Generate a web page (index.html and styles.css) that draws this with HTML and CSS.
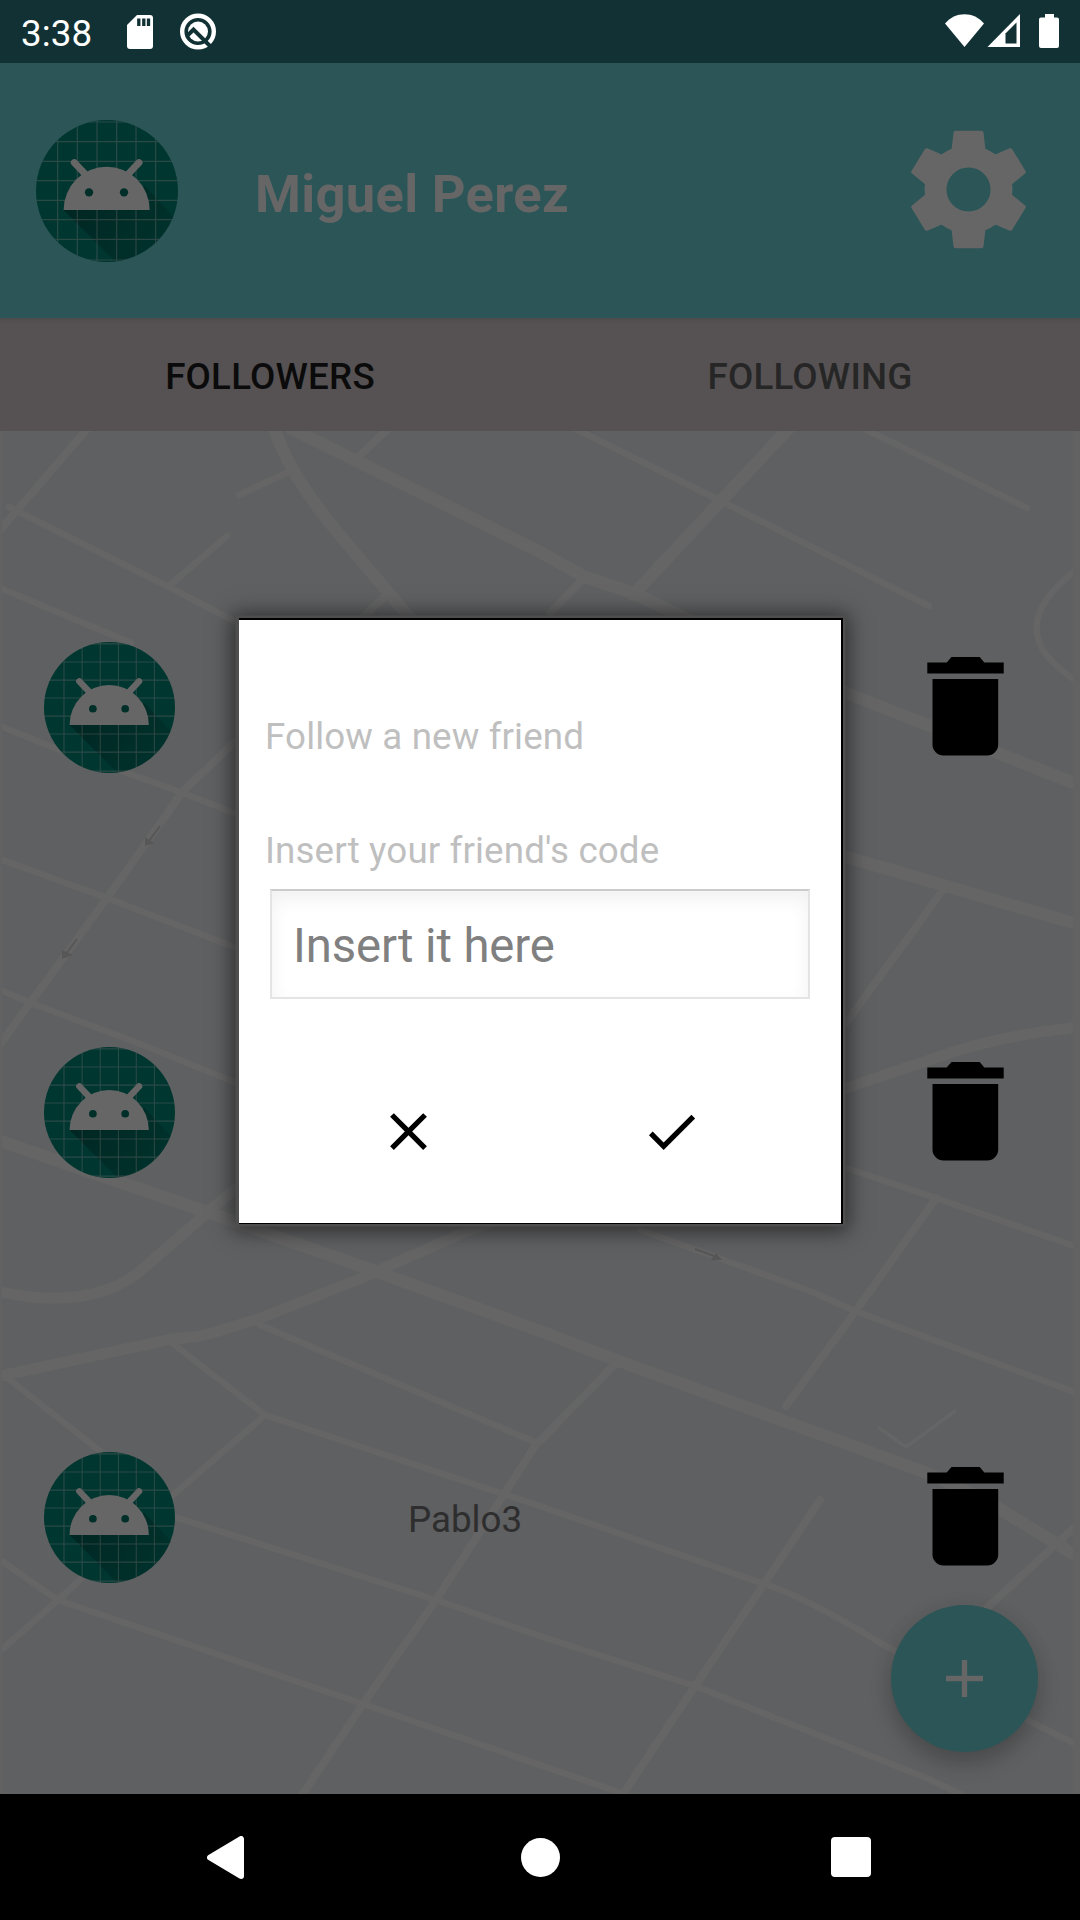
FILE: index.html
```html
<!DOCTYPE html>
<html lang="en">
<head>
<meta charset="utf-8">
<title>Followers</title>
<link rel="stylesheet" href="styles.css">
</head>
<body>
<svg class="defs" width="0" height="0">
  <defs>
    <linearGradient id="shade" x1="131" y1="270" x2="400" y2="480" gradientUnits="userSpaceOnUse">
      <stop offset="0" stop-color="#000" stop-opacity=".32"/>
      <stop offset="1" stop-color="#000" stop-opacity=".08"/>
    </linearGradient>
    <clipPath id="disc"><circle cx="261" cy="273" r="213"/></clipPath>
    <symbol id="avatar" viewBox="48 60 426 426">
      <g clip-path="url(#disc)">
        <rect x="48" y="60" width="426" height="426" fill="#003630"/>
        <path d="M131 330 300 499H480V370L375 258Z" fill="url(#shade)"/>
        <path d="M113 60V486M172 60V486M231 60V486M290 60V486M348 60V486M407 60V486M48 66H474M48 125H474M48 184H474M48 242H474M48 301H474M48 359H474M48 418H474M48 480H474" stroke="#666" stroke-opacity=".42" stroke-width="3.6"/>
      </g>
      <path d="M131 330A129 130 0 0 1 389 330Z" fill="#666"/>
      <path d="M163 188 197 224M357 188 323 224" stroke="#666" stroke-width="21" stroke-linecap="round"/>
      <circle cx="207" cy="277" r="12.5" fill="#002f2a"/><circle cx="312" cy="277" r="12.5" fill="#002f2a"/>
    </symbol>
    <symbol id="trash" viewBox="0 0 77 99">
      <path d="M.3 16.500V5.500H19.700L24.500 0H52.700L57.300 5.500H76.700V16.500ZM5.500 22H71.200V87.500A11 11 0 0 1 60.200 98.500H16.500A11 11 0 0 1 5.500 87.500Z"/>
    </symbol>
  </defs>
</svg>
<div class="screen">
  <div class="statusbar">
    <span class="time">3:38</span>
    <svg class="sd" viewBox="0 0 26 34"><path d="M10 0H23A3 3 0 0 1 26 3V31A3 3 0 0 1 23 34H3A3 3 0 0 1 0 31V10Z" fill="#fff"/><path d="M11.800 3.500V11M16.800 3.500V11M21.500 3.500V11" stroke="#113134" stroke-width="3.300"/></svg>
    <svg class="quick" viewBox="0 0 36 37"><circle cx="18" cy="18.500" r="15.800" fill="none" stroke="#fff" stroke-width="4.400"/><circle cx="18" cy="18.500" r="10" fill="#fff"/><path d="M8 22 13.500 16.500 30 33" fill="none" stroke="#113134" stroke-width="4"/></svg>
    <svg class="signals" viewBox="0 0 114 34">
      <path d="M0 9.500C10 -3 29 -3 39 9.500L19.500 33Z" fill="#fff"/>
      <path d="M42.500 33 75 0V33Z" fill="#fff"/><path d="M60.500 19.500 71.500 8.500V29.500H60.500Z" fill="#113134"/>
      <path d="M100 0H109V3.500H112A2 2 0 0 1 114 5.500V32A2 2 0 0 1 112 34H96A2 2 0 0 1 94 32V5.500A2 2 0 0 1 96 3.500H100Z" fill="#fff"/>
    </svg>
  </div>
  <header class="header">
    <svg class="me"><use href="#avatar"/></svg>
    <h1 class="name">Miguel Perez</h1>
    <svg class="gear" viewBox="-57.500 -58.500 116 118"><path fill-rule="evenodd" fill="#666" stroke="#666" stroke-width="4" stroke-linejoin="round" d="M-13-56.700H13L15-39.500Q21-37 27-32.800L42-39.300 55.300-17.500 41.300-6Q42.600 0 41.300 6L55.300 17.500 42 39.300 27 32.800Q21 37 15 39.500L13 56.700H-13L-15 39.500Q-21 37-27 32.800L-42 39.300-55.300 17.500-41.300 6Q-42.600 0-41.300-6L-55.300-17.500-42-39.300-27-32.800Q-21-37-15-39.500ZM24 0A24 24 0 1 0-24 0A24 24 0 1 0 24 0Z"/></svg>
  </header>
  <nav class="tabs">
    <span class="tab active">FOLLOWERS</span>
    <span class="tab">FOLLOWING</span>
  </nav>
  <main class="list">
    <svg class="map" viewBox="0 431 1080 1363">
      <path class="edge" d="M0 431H2V1794H0ZM1073 431H1080V1794H1073Z"/>
      <svg x="2" y="431" width="1071" height="1363" viewBox="2 431 1071 1363">
        <g class="roads">
          <path class="w13" d="M275 431Q282 450 293 470Q310 500 344 540L410 618M290 428 540 552 585 577 633 593 700 625 846 693 933 727 998 753 1076 784M790 427 633 595M0 1141 207 1212 372 1270 540 1331 616 1360 919 1470Q960 1486 998 1508L1080 1558M846 857 943 885 1080 925"/>
          <path class="w11" d="M234 1190 207 1213 145 1267Q95 1312 0 1292M0 1376 172 1339Q193 1338 212 1333L258 1319 362 1278 465 1232 846 1088 953 1052Q1010 1034 1080 1027"/>
          <path class="w8" d="M88 428 0 530M388 429 358 457M585 577 550 613M389 593 365 615M234 743 183 791 107 898 31 1002 0 1044M943 890 846 1023M936 1198 871 1290 786 1406M820 1500 764 1584 695 1686 623 1794M1080 1522 988 1607M537 1443 436 1600 363 1704 300 1798M540 1441 617 1362"/>
          <path class="w7" d="M9 507 165 585 234 621M227 536 169 586M0 588 131 643M239 495 293 470M576 429 719 500 929 606M865 429 1027 508M1080 567C1022 610 1022 648 1080 683M0 726 52 747 127 773 183 793 234 813M0 859 107 898 234 947M0 990 31 1003 138 1043 234 1082M846 1168 936 1198 1080 1248M640 1230 719 1258 815 1293 855 1311 1080 1394M5 1376 100 1451M172 1343 265 1415 172 1496 58 1600 0 1651M265 1415 540 1506 764 1584Q802 1595 884 1645L1029 1721 1080 1746M258 1324 537 1443M172 1516 436 1600 540 1636 695 1686 929 1779 964 1796M0 1560 58 1600 363 1704 540 1765 630 1796"/>
          <path class="w4" d="M879 1428 906 1447 955 1411"/>
        </g>
      </svg>
      <path class="arrows" d="M160 826 149 841M77 939 66 954M695 1249 714 1256"/>
      <path class="heads" d="M145 846 145 837 154 843ZM62 959 62 950 73 955ZM722 1260 711 1260 716 1253Z"/>
    </svg>
    <div class="row"><svg class="avatar"><use href="#avatar"/></svg><span class="friend"></span><svg class="trash"><use href="#trash"/></svg></div>
    <div class="row"><svg class="avatar"><use href="#avatar"/></svg><span class="friend"></span><svg class="trash"><use href="#trash"/></svg></div>
    <div class="row"><svg class="avatar"><use href="#avatar"/></svg><span class="friend">Pablo3</span><svg class="trash"><use href="#trash"/></svg></div>
    <div class="fab"><svg viewBox="0 0 37 37"><path d="M0 18.500H37M18.500 0V37" stroke="#666" stroke-width="5.300"/></svg></div>
  </main>
  <div class="dialog">
    <p class="title">Follow a new friend</p>
    <p class="label">Insert your friend's code</p>
    <div class="field">Insert it here</div>
    <div class="actions">
      <svg viewBox="0 0 24 24"><path d="M19 6.410 17.590 5 12 10.590 6.410 5 5 6.410 10.590 12 5 17.590 6.410 19 12 13.410 17.590 19 19 17.590 13.410 12Z"/></svg>
      <svg viewBox="0 0 24 24"><path d="M9 16.170 4.830 12 3.410 13.410 9 19 21 7 19.590 5.590Z"/></svg>
    </div>
  </div>
  <footer class="navbar">
    <svg class="back" viewBox="0 0 37 43"><path d="M3 21.500 34 3V40Z" fill="#fff" stroke="#fff" stroke-width="6" stroke-linejoin="round"/></svg>
    <span class="home"></span>
    <span class="recent"></span>
  </footer>
</div>
</body>
</html>
```
FILE: styles.css
```css
* { box-sizing: border-box; }
body { margin: 0; background: #000; font-family: Roboto, sans-serif; font-size: 36.75px; }
svg { display: block; flex: none; }
h1, p { margin: 0; font-weight: 400; }
.defs { position: absolute; }
.screen { position: relative; width: 1080px; height: 1920px; display: flex; flex-direction: column; overflow: hidden; }

.statusbar { height: 63px; background: #113134; color: #fff; display: flex; align-items: flex-start; padding: 14px 21px 0 21px; }
.time { width: 106px; line-height: 40px; letter-spacing: .1px; }
.sd { width: 26px; height: 34px; margin-top: 1px; }
.quick { width: 36px; height: 37px; margin-left: 27px; margin-top: -1px; }
.signals { width: 114px; height: 34px; margin-left: auto; }

.header { height: 255px; background: #2c5557; display: flex; align-items: center; padding: 0 53px 0 36px; }
.me { width: 142px; height: 142px; }
.name { flex: 1; margin-left: 77px; padding-top: 6px; font-size: 52.5px; font-weight: 700; letter-spacing: .32px; color: #666; }
.gear { width: 116px; height: 118px; overflow: visible; margin-bottom: 2px; }

.tabs { height: 113px; background: linear-gradient(#4f4c4d, #565253 6px); display: flex; }
.tab { flex: 1; text-align: center; line-height: 117px; font-weight: 500; letter-spacing: .2px; color: #262626; }
.tab.active { color: #0b0b0b; }

.list { position: relative; height: 1363px; background: #5f6061; padding-top: 74px; overflow: hidden; }
.map { position: absolute; inset: 0; width: 1080px; height: 1363px; }
.edge { fill: #626262; }
.roads path { fill: none; stroke: #656565; stroke-linecap: round; stroke-linejoin: round; }
.roads .w13 { stroke-width: 12.5px; }
.roads .w11 { stroke-width: 11px; }
.roads .w8 { stroke-width: 8px; }
.roads .w7 { stroke-width: 6.500px; }
.roads .w4 { stroke-width: 3.500px; }
.arrows { stroke: #575757; stroke-width: 2px; fill: none; }
.heads { fill: #575757; }
.row { position: relative; height: 405px; display: flex; align-items: center; padding: 0 76px 0 44px; }
.avatar { width: 131px; height: 131px; }
.friend { flex: 1; padding: 4px 0 0 233px; color: #2e2e2f; }
.trash { width: 77px; height: 99px; margin-bottom: 2px; }
.fab { position: absolute; left: 891px; top: 1174px; width: 147px; height: 147px; border-radius: 50%; background: #2c5557; display: flex; align-items: center; justify-content: center; box-shadow: 0 12px 22px rgba(0,0,0,.2), 0 2px 22px rgba(0,0,0,.06); }
.fab svg { width: 37px; height: 37px; }

.dialog { position: absolute; left: 239px; top: 620px; width: 602px; height: 603px; background: #fff; padding: 95px 31px 0 26px; display: flex; flex-direction: column; box-shadow: 1px 0 0 1px #000, 1px -1px 0 1px #000, 0.5px -0.5px 0 4px #4e4e4e, 0 1px 20px 7px rgba(0,0,0,.55); }
.title, .label { line-height: 44px; color: #bfbfbf; letter-spacing: .12px; }
.title { height: 114px; }
.label { height: 60px; }
.field { margin-left: 5px; height: 110px; line-height: 111px; padding-left: 21px; font-size: 47.25px; letter-spacing: -.1px; color: #808080; border: 2px solid #e4e4e4; border-top-color: #cbcbcb; box-shadow: inset 0 8px 18px rgba(0,0,0,.06); }
.actions { display: flex; gap: 200px; margin: 101px 0 0 112px; }
.actions svg { width: 63px; height: 63px; }

.navbar { height: 126px; background: #000; display: flex; align-items: center; padding-left: 207px; }
.back { width: 37px; height: 43px; }
.home { width: 39px; height: 39px; border-radius: 50%; background: #fff; margin-left: 276.5px; }
.recent { width: 40px; height: 40px; border-radius: 4px; background: #fff; margin-left: 271.5px; }
```
